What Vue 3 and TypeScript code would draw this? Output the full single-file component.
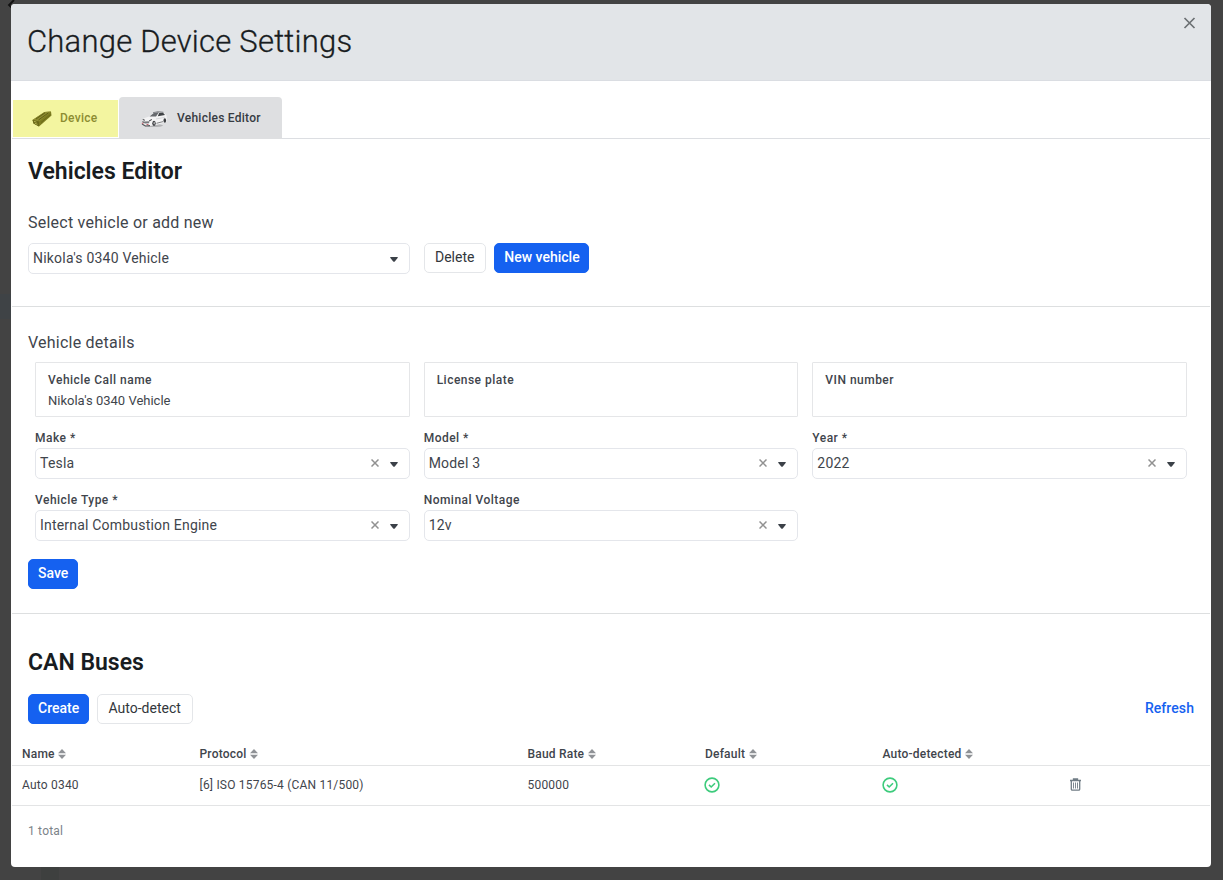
<script setup lang="ts">
import { ref } from 'vue'

interface Field {
  label: string
  value: string
}

const textFields: Field[] = [
  { label: 'Vehicle Call name', value: "Nikola's 0340 Vehicle" },
  { label: 'License plate', value: '' },
  { label: 'VIN number', value: '' },
]

const selectFields = ref<Field[]>([
  { label: 'Make *', value: 'Tesla' },
  { label: 'Model *', value: 'Model 3' },
  { label: 'Year *', value: '2022' },
  { label: 'Vehicle Type *', value: 'Internal Combustion Engine' },
  { label: 'Nominal Voltage', value: '12v' },
])

const columns = ['Name', 'Protocol', 'Baud Rate', 'Default', 'Auto-detected']
const buses = [
  { name: 'Auto 0340', protocol: '[6] ISO 15765-4 (CAN 11/500)', baud: '500000' },
]
</script>

<template>
  <div class="backdrop">
    <svg class="back-chevron" viewBox="0 0 8 10"><path d="M7 0 2 5l5 5" /></svg>
    <div class="modal">
      <header class="modal-header">
        <h1>Change Device Settings</h1>
        <button class="close" aria-label="Close">
          <svg viewBox="0 0 12 12"><path d="M1 1l10 10M11 1L1 11" /></svg>
        </button>
      </header>

      <nav class="tabs">
        <div class="tab device">
          <svg class="device-icon" viewBox="0 0 20 16">
            <path d="M.5 9 12.500 1 19 .6 19.500 4.500 7 15.500 1.500 12.500Z" fill="#7d7c20" />
            <path d="M.5 9 12.500 1 19 .6 7 10.500Z" fill="#8d8c30" />
            <path d="M.5 9 7 10.500 7 15.500 1.500 12.500Z" fill="#6a6918" />
            <path d="M4 8 13 1.800M6.500 9 16.500 1.800" stroke="#626116" stroke-width="1" />
            <path d="M9 11.500 18.500 3.500" stroke="#6b6a1a" stroke-width="1" />
            <path d="M2 10.300 4.500 11.200M2.800 12.200 5.500 13.300" stroke="#bcbb58" stroke-width=".8" />
          </svg>
          <span>Device</span>
        </div>
        <div class="tab vehicles">
          <svg class="car-icon" viewBox="0 0 27 17">
            <ellipse cx="12" cy="14.600" rx="10" ry="1.500" fill="#b2b3b5" />
            <path d="M1 10 3 7.300 8 5.400 12.500 1.600 17 .8 22.500 1.300 25.500 4.500 26 10 24.500 11.300 13 14.500 5 15.200 1.200 13Z" fill="#f3f3f4" />
            <path d="M8.500 5.400 12.800 2.100 17 1.200 18 1.200 15 5.600Z" fill="#66696d" />
            <path d="M16.800 5.200 18.300 1.800 22 1.800 24 4Z" fill="#3f4245" />
            <path d="M12 1.700 17 .7 22.500 1.300" fill="none" stroke="#55585b" stroke-width=".7" />
            <path d="M1.200 9.800 3 10.500 8.500 10.300 8 12.200 4.500 12.600 1.500 11.800Z" fill="#77797c" />
            <path d="M1.800 8.600 3.800 9.200M8.200 9.800 10.800 8.600" stroke="#303235" stroke-width="1" />
            <path d="M1 13 4.500 15 9 14.600" fill="none" stroke="#55575a" stroke-width="1.1" />
            <path d="M.8 12.300h1.700M5.500 13.500h2" stroke="#c0606c" stroke-width="1" />
            <ellipse cx="13" cy="12.300" rx="1.700" ry="2.600" fill="#343639" />
            <ellipse cx="13.200" cy="12.200" rx=".8" ry="1.400" fill="#a7a9ab" />
            <ellipse cx="23.800" cy="9.500" rx="1.300" ry="2.200" fill="#3c3e41" />
            <path d="M15.500 12.300 22 10.600" stroke="#65676a" stroke-width=".8" />
            <path d="M15 8 24 6.200" stroke="#c6c8cb" stroke-width=".6" />
          </svg>
          <span>Vehicles Editor</span>
        </div>
      </nav>

      <section class="picker">
        <h2>Vehicles Editor</h2>
        <p class="subtitle">Select vehicle or add new</p>
        <div class="picker-row">
          <div class="select">
            <span class="select-value">Nikola's 0340 Vehicle</span>
            <svg class="caret" viewBox="0 0 8 5"><path d="M.8 0h6.400q1.200 0 .4 1L5 4.300q-1 1-2 0L.4 1q-.8-1 .4-1" /></svg>
          </div>
          <button class="btn">Delete</button>
          <button class="btn primary new">New vehicle</button>
        </div>
      </section>

      <section class="details">
        <p class="subtitle">Vehicle details</p>
        <div class="grid text-grid">
          <div v-for="field in textFields" :key="field.label" class="text-field">
            <label>{{ field.label }}</label>
            <span>{{ field.value }}</span>
          </div>
        </div>
        <div class="grid select-grid">
          <div v-for="field in selectFields" :key="field.label" class="select-field">
            <label>{{ field.label }}</label>
            <div class="select">
              <span class="select-value">{{ field.value }}</span>
              <svg class="clear" viewBox="0 0 8 8"><path d="M.5.5l7 7M7.500.5l-7 7" /></svg>
              <svg class="caret" viewBox="0 0 8 5"><path d="M.8 0h6.400q1.200 0 .4 1L5 4.300q-1 1-2 0L.4 1q-.8-1 .4-1" /></svg>
            </div>
          </div>
        </div>
        <button class="btn primary save">Save</button>
      </section>

      <section class="buses">
        <h2>CAN Buses</h2>
        <div class="toolbar">
          <button class="btn primary">Create</button>
          <button class="btn auto">Auto-detect</button>
          <a class="refresh">Refresh</a>
        </div>
        <div class="row head">
          <span v-for="column in columns" :key="column" class="th">
            {{ column }}
            <svg class="sort" viewBox="0 0 8 10"><path d="M4 0 8 4.300H0ZM4 10 0 5.700h8Z" /></svg>
          </span>
        </div>
        <div v-for="bus in buses" :key="bus.name" class="row">
          <span>{{ bus.name }}</span>
          <span>{{ bus.protocol }}</span>
          <span>{{ bus.baud }}</span>
          <span v-for="n in 2" :key="n" class="icon-cell">
            <svg class="check" viewBox="0 0 16 16"><circle cx="8" cy="8" r="6.900" /><path d="M5 7.900 7.200 10 11 6.200" /></svg>
          </span>
          <span class="icon-cell trash-cell">
            <svg class="trash" viewBox="0 0 11 13">
              <path d="M3.500 2V1h4v1M0 2.500h11M1.300 3v8.200q0 1 1 1h6.400q1 0 1-1V3" />
              <path class="bars" d="M3.500 4.500v6M5.500 4.500v6M7.500 4.500v6" />
            </svg>
          </span>
        </div>
        <p class="total">1 total</p>
      </section>
    </div>
  </div>
</template>

<style>
body {
  margin: 0;
  overflow: hidden;
  background: #444;
}
</style>

<style scoped>
* {
  box-sizing: border-box;
}
.backdrop {
  position: relative;
  width: 1223px;
  height: 880px;
  padding: 4px 12px 13px 11px;
  background:
    linear-gradient(#3f4346, #3f4346) 0 294px / 11px 25px no-repeat,
    linear-gradient(#3e403f, #3e403f) 41px 867px / 18px 13px no-repeat,
    #434343;
  color: #3f454c;
  font-family: Roboto, "Liberation Sans", sans-serif;
}
.back-chevron {
  position: absolute;
  left: 7px;
  top: 0;
  width: 8px;
  height: 10px;
  fill: none;
  stroke: #111;
  stroke-width: 1.8;
}
.modal {
  position: relative;
  height: 863px;
  overflow: hidden;
  border-radius: 4px;
  background: #fff;
}
h1, h2, p {
  margin: 0;
}
.modal-header {
  display: flex;
  justify-content: space-between;
  height: 77px;
  padding: 0 15px 0 16px;
  border-bottom: 1px solid #dadde2;
  background: #e2e5e8;
}
h1 {
  color: #181c21;
  font-size: 31px;
  font-weight: 300;
  line-height: 75px;
  letter-spacing: 0.22px;
  white-space: nowrap;
  -webkit-text-stroke: 0.3px #181c21;
}
.close {
  width: 13px;
  height: 12px;
  margin-top: 13px;
  padding: 0;
  border: 0;
  background: none;
}
.close svg {
  display: block;
  width: 13px;
  height: 12px;
  fill: none;
  stroke: #6c7073;
  stroke-width: 1.7;
}
.tabs {
  display: flex;
  align-items: flex-end;
  height: 58px;
  margin: 0 1px;
  padding-left: 1px;
  border-bottom: 1px solid #dcdee2;
  font-size: 12px;
  font-weight: 500;
  letter-spacing: 0.25px;
  white-space: nowrap;
}
.tab {
  display: flex;
  align-items: center;
}
.device {
  width: 105px;
  height: 37px;
  margin: 0 1px 1px 0;
  padding: 0 0 1px 19px;
  background: #f3f5a0;
  color: #8c8c31;
}
.device-icon {
  width: 20px;
  height: 16px;
  margin: 1px 8px 0 0;
}
.vehicles {
  width: 163px;
  height: 42px;
  margin-bottom: -1px;
  padding: 0 0 0 22px;
  border-radius: 4px 4px 0 0;
  background: #dedfe1;
  color: #363b41;
}
.car-icon {
  width: 27px;
  height: 17px;
  margin: 2px 9px 0 0;
}
.picker {
  height: 168px;
  margin: 0 1px;
  padding: 18px 16px 0;
  border-bottom: 1px solid #dddfe0;
}
h2 {
  color: #181c21;
  font-size: 23px;
  font-weight: 600;
  line-height: 30px;
}
.subtitle {
  font-size: 16px;
  line-height: 20px;
  letter-spacing: 0.23px;
}
.picker .subtitle {
  margin-top: 26px;
}
.picker-row {
  display: flex;
  gap: 8px;
  margin-top: 10px;
}
.picker-row .select {
  width: 382px;
  margin-right: 6px;
}
.select {
  display: flex;
  align-items: center;
  height: 31px;
  padding: 0 11px 0 4px;
  border: 1px solid #e4e6eb;
  border-radius: 5px;
  font-size: 14px;
  letter-spacing: 0.2px;
}
.select-value {
  flex: 1;
  line-height: 29px;
}
.caret {
  width: 8px;
  height: 5px;
  margin-top: 2px;
  fill: #3b4148;
}
.clear {
  width: 8px;
  height: 8px;
  margin: 0 11px 1px 0;
  fill: none;
  stroke: #919191;
  stroke-width: 1.5;
}
.btn {
  height: 30px;
  padding: 0 11px 2px 10px;
  border: 1px solid #e4e6e9;
  border-radius: 5px;
  background: #fff;
  color: #33373c;
  font-family: inherit;
  font-size: 14px;
  font-weight: 400;
  line-height: 26px;
  white-space: nowrap;
}
.auto {
  width: 96px;
}
.primary {
  padding: 0 9px 2px;
  border-color: #1561f0;
  background: #1561f0;
  color: #fff;
  font-weight: 500;
}
.new {
  width: 95px;
  padding: 0 8px 2px;
}
.details {
  height: 307px;
  margin: 0 1px;
  padding: 26px 16px 0;
  border-bottom: 1px solid #dddfe0;
}
.grid {
  display: grid;
  grid-template-columns: repeat(3, 1fr);
  column-gap: 14px;
  padding: 0 7px;
}
.text-grid {
  margin-top: 9px;
}
label {
  display: block;
  font-size: 12px;
  font-weight: 500;
  letter-spacing: 0.48px;
}
.text-field {
  height: 55px;
  padding: 7px 12px;
  border: 1px solid #e5e6e8;
  border-radius: 1px;
}
.text-field label {
  line-height: 20px;
}
.text-field span {
  display: block;
  font-size: 13px;
  line-height: 22px;
}
.select-grid {
  margin-top: 11px;
}
.select-field label {
  height: 20px;
  line-height: 20px;
}
.select-field {
  height: 62px;
}
.save {
  display: block;
  margin-top: 7px;
}
.buses {
  padding: 0 1px;
}
.buses h2 {
  padding: 34px 0 0 16px;
}
.toolbar {
  display: flex;
  gap: 8px;
  height: 30px;
  margin: 16px 16px 0;
}
.refresh {
  margin-left: auto;
  color: #1561f0;
  font-size: 14px;
  font-weight: 500;
  line-height: 28px;
  letter-spacing: 0.08px;
}
.row {
  display: grid;
  grid-template-columns: 177.500px 328px 177.500px 177.500px 187px 1fr;
  align-items: center;
  height: 40px;
  padding: 0 0 1px 10px;
  border-bottom: 1px solid #e3e4e5;
  font-size: 12px;
  letter-spacing: 0.2px;
}
.head {
  height: 42px;
  padding: 19px 0 0 10px;
  font-weight: 500;
}
.th {
  display: flex;
  align-items: center;
  gap: 3.5px;
}
.sort {
  width: 8px;
  height: 10px;
  fill: #8f9296;
}
.icon-cell {
  display: flex;
  margin: -1px 0 0 -1px;
}
.check {
  width: 16px;
  height: 16px;
  fill: none;
  stroke: #3dcb7c;
  stroke-width: 1.6;
}
.trash-cell {
  margin: -2px 0 0;
}
.trash {
  width: 11px;
  height: 13px;
  fill: none;
  stroke: #707c85;
  stroke-width: 1.3;
}
.bars {
  stroke-width: 0.9;
}
.total {
  padding: 15px 0 0 16px;
  color: #7c8389;
  font-size: 12px;
  line-height: 20px;
  letter-spacing: 0.2px;
}
</style>
